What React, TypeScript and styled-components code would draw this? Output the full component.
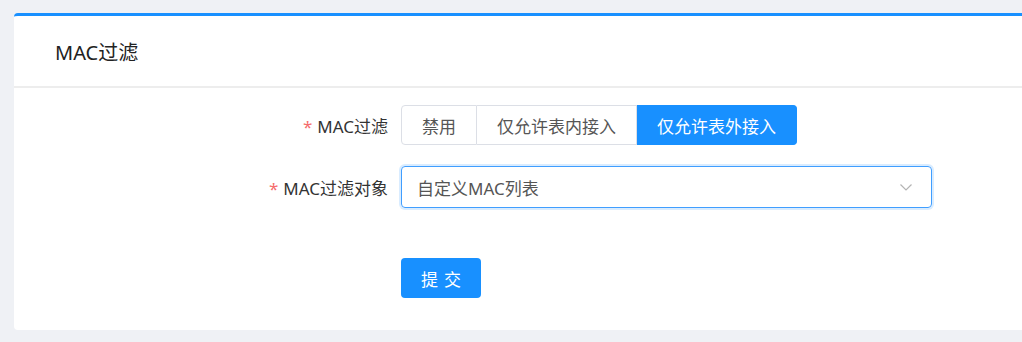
import React, { useState } from "react";
import styled, { createGlobalStyle } from "styled-components";

const GlobalStyle = createGlobalStyle`
  html, body {
    margin: 0;
    padding: 0;
    background: #eff1f5;
    overflow: hidden;
    font-family: "Noto Sans", "Noto Sans CJK SC", sans-serif;
  }
`;

const Page = styled.div`
  padding: 13px 0 0 14px;
  height: 342px;
  box-sizing: border-box;
`;

const Card = styled.div`
  width: 1040px;
  background: #fff;
  border-top: 3px solid #1890ff;
  border-radius: 4px;
  padding-bottom: 32px;
`;

const Header = styled.div`
  height: 70px;
  display: flex;
  align-items: center;
  padding-left: 41px;
  font-size: 20px;
  color: #222;
  border-bottom: 2px solid #ededed;
`;

const Form = styled.div`
  padding-top: 17px;
  display: flex;
  flex-direction: column;
`;

const Row = styled.div<{ $gap?: number }>`
  display: flex;
  align-items: center;
  margin-top: ${(p) => p.$gap ?? 0}px;
`;

const Label = styled.div`
  width: 387px;
  box-sizing: border-box;
  padding-right: 13px;
  text-align: right;
  font-size: 17px;
  color: #333;
`;

const Star = styled.span`
  color: #f56c6c;
  margin-right: 5px;
`;

const Group = styled.div`
  display: flex;
`;

const RadioBtn = styled.button<{ $active: boolean }>`
  height: 40px;
  padding: 0 20px;
  font-family: inherit;
  font-size: 17px;
  border: 1px solid ${(p) => (p.$active ? "#1890ff" : "#dcdfe6")};
  border-left-width: 0;
  background: ${(p) => (p.$active ? "#1890ff" : "#fff")};
  color: ${(p) => (p.$active ? "#fff" : "#555")};
  cursor: pointer;
  &:first-child {
    border-left-width: 1px;
    border-radius: 4px 0 0 4px;
  }
  &:last-child {
    border-radius: 0 4px 4px 0;
  }
`;

const Select = styled.div`
  width: 531px;
  height: 42px;
  box-sizing: border-box;
  display: flex;
  align-items: center;
  justify-content: space-between;
  padding: 0 18px 0 15px;
  border: 1px solid #409eff;
  border-radius: 4px;
  box-shadow: 0 0 0 2px rgba(64, 158, 255, 0.2);
  font-size: 17px;
  color: #555;
`;

const Submit = styled.button`
  width: 80px;
  height: 40px;
  border: none;
  border-radius: 4px;
  background: #1890ff;
  color: #fff;
  font-family: inherit;
  font-size: 17px;
  letter-spacing: 6px;
  text-indent: 6px;
  cursor: pointer;
`;

const options = ["禁用", "仅允许表内接入", "仅允许表外接入"];

export default function App() {
  const [mode, setMode] = useState(2);
  return (
    <Page>
      <GlobalStyle />
      <Card>
        <Header>MAC过滤</Header>
        <Form>
          <Row>
            <Label>
              <Star>*</Star>MAC过滤
            </Label>
            <Group>
              {options.map((o, i) => (
                <RadioBtn key={o} $active={mode === i} onClick={() => setMode(i)}>
                  {o}
                </RadioBtn>
              ))}
            </Group>
          </Row>
          <Row $gap={21}>
            <Label>
              <Star>*</Star>MAC过滤对象
            </Label>
            <Select>
              <span>自定义MAC列表</span>
              <svg width="14" height="14" viewBox="0 0 14 14">
                <polyline points="1.5,4.5 7,10 12.5,4.5" fill="none" stroke="#b4b4b4" strokeWidth="1.2" />
              </svg>
            </Select>
          </Row>
          <Row $gap={50}>
            <Label />
            <Submit>提交</Submit>
          </Row>
        </Form>
      </Card>
    </Page>
  );
}
